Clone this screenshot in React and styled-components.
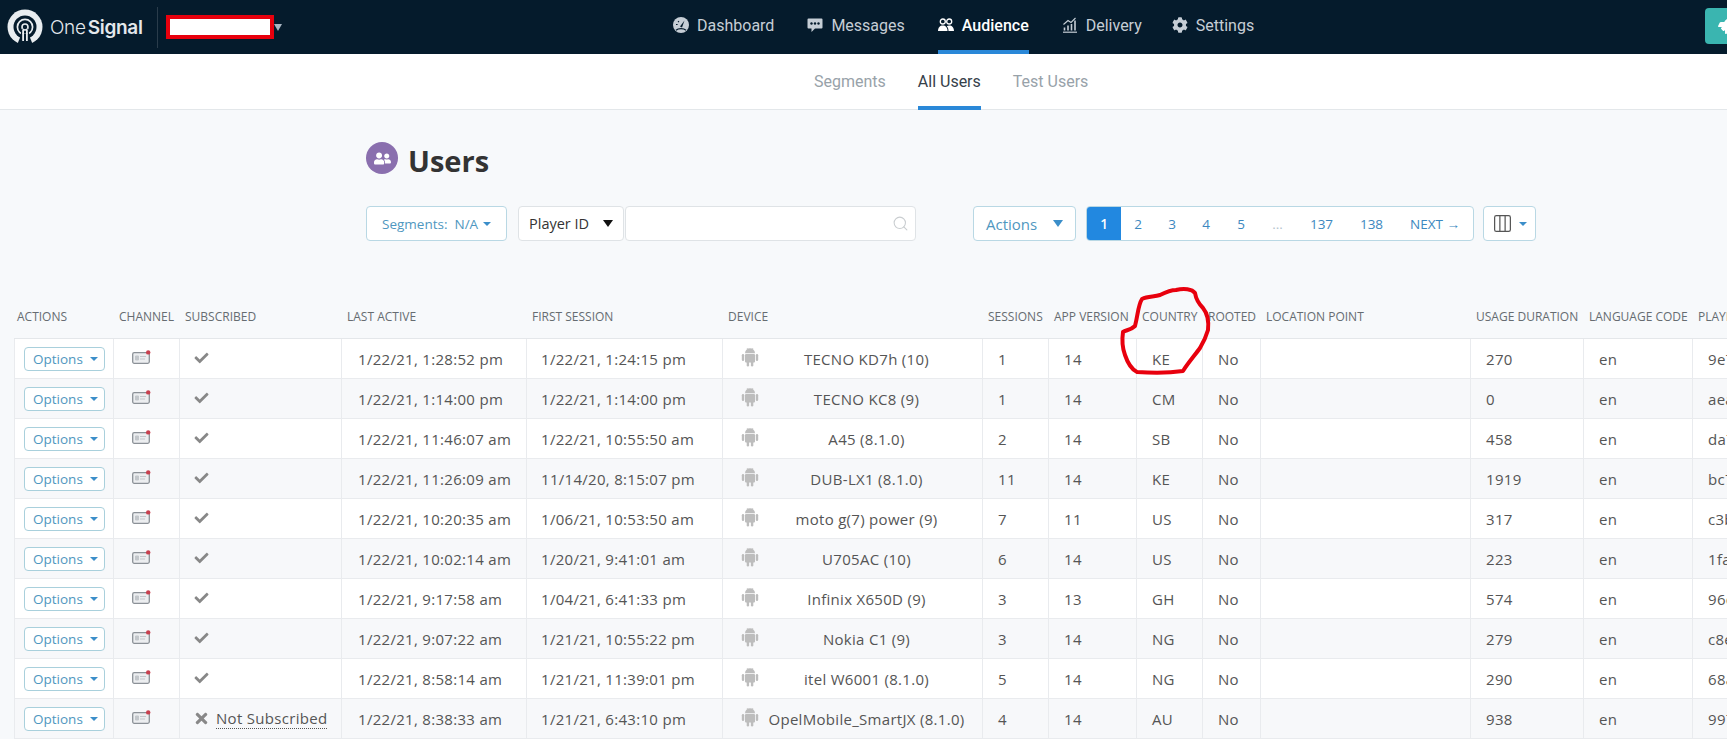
import React from 'react';
import styled, { createGlobalStyle } from 'styled-components';
import { FaCheck, FaCog, FaRocket, FaTimes, FaUserFriends } from 'react-icons/fa';
import { Columns3, Search } from 'lucide-react';

const GlobalStyle = createGlobalStyle`
    html, body {
        margin: 0;
        height: 100%;
        overflow: hidden;
        background-color: #f7f9fb;
        font-family: "Open Sans", "Liberation Sans", sans-serif;
    }
    * {
        box-sizing: border-box;
    }
`;

// Top bar
const Page = styled.div`
    position: relative;
    width: 1727px;
    height: 739px;
    overflow: hidden;
`;

const TopBar = styled.header`
    height: 54px;
    display: flex;
    align-items: stretch;
    background-color: #051b2c;
`;

const Brand = styled.div`
    width: 673px;
    flex: none;
    display: flex;
    align-items: center;
    padding-left: 7px;
`;

const Wordmark = styled.div`
    width: 99px;
    margin-left: 7px;
    font-family: Inter, sans-serif;
    font-size: 19px;
    font-weight: 300;
    color: #e4e8ec;
    letter-spacing: -0.3px;

    b {
        font-weight: 600;
        margin-left: 2px;
    }
`;

const BrandDivider = styled.div`
    width: 1px;
    height: 41px;
    margin-left: 8px;
    background-color: #2a3c4b;
`;

const AppName = styled.div`
    width: 108px;
    height: 24px;
    margin-left: 8px;
    background-color: #fff;
    border: 4px solid #e8000d;
`;

const AppCaret = styled.span`
    width: 0;
    height: 0;
    border-left: 4px solid transparent;
    border-right: 4px solid transparent;
    border-top: 7px solid #a9b6c2;
`;

const NavList = styled.nav`
    display: flex;
    gap: 33px;
`;

const NavItem = styled.a`
    display: flex;
    align-items: center;
    gap: 8px;
    height: 54px;
    margin-left: ${(props) => props.$nudge || 0}px;
    font-family: Roboto, sans-serif;
    font-size: 16px;
    font-weight: ${(props) => (props.$active ? 500 : 400)};
    color: ${(props) => (props.$active ? '#fff' : '#c6ced6')};
    border-bottom: 4px solid ${(props) => (props.$active ? '#2a88d8' : 'transparent')};

    svg {
        width: 16px;
        height: 16px;
        flex: none;
    }
`;

const UpgradeButton = styled.div`
    width: 22px;
    height: 36px;
    margin: 8px 0 0 auto;
    padding: 10px 0 0 13px;
    overflow: hidden;
    background-color: #3ab5b0;
    border-radius: 4px 0 0 4px;
    color: #fff;
    font-size: 16px;
    line-height: 1;
`;

// Sub navigation
const SubBar = styled.div`
    height: 56px;
    display: flex;
    gap: 32px;
    padding-left: 814px;
    background-color: #fff;
    border-bottom: 1px solid #e3e7ea;
`;

const SubTab = styled.a`
    height: 56px;
    display: flex;
    align-items: center;
    padding-top: 2px;
    font-family: Roboto, sans-serif;
    font-size: 16px;
    color: ${(props) => (props.$active ? '#36414a' : '#98a2a9')};
    border-bottom: 4px solid ${(props) => (props.$active ? '#2a88d8' : 'transparent')};
`;

// Title and toolbar
const TitleRow = styled.div`
    display: flex;
    align-items: center;
    gap: 10px;
    padding: 32px 0 0 366px;
    height: 96px;
`;

const TitleBadge = styled.div`
    width: 32px;
    height: 32px;
    display: flex;
    align-items: center;
    justify-content: center;
    margin-bottom: 32px;
    border-radius: 50%;
    background-color: #8a6fae;
    color: #fff;
    font-size: 17px;
`;

const Title = styled.h1`
    margin: 0 0 28px;
    font-size: 29px;
    font-weight: 700;
    color: #333;
`;

const Toolbar = styled.div`
    display: flex;
    height: 35px;
    padding-left: 366px;
`;

const OutlineButton = styled.div`
    display: flex;
    align-items: center;
    justify-content: space-between;
    width: ${(props) => props.$width}px;
    margin-left: ${(props) => props.$gap || 0}px;
    padding: 0 ${(props) => props.$pad || 12}px;
    background-color: #fff;
    border: 1px solid #b9d8e4;
    border-radius: 4px;
    color: #4f97c0;
    font-size: ${(props) => props.$size || 15}px;
`;

const Caret = styled.span`
    width: 0;
    height: 0;
    flex: none;
    border-left: ${(props) => props.$w || 4}px solid transparent;
    border-right: ${(props) => props.$w || 4}px solid transparent;
    border-top: ${(props) => props.$h || 4}px solid ${(props) => props.$color || '#3b8ec9'};
`;

const SelectBox = styled.div`
    width: 106px;
    margin-left: 11px;
    display: flex;
    align-items: center;
    justify-content: space-between;
    padding: 0 10px;
    background-color: #fff;
    border: 1px solid #dfe3e6;
    border-radius: 4px;
    color: #333;
    font-size: 14.5px;
`;

const SearchBox = styled.div`
    width: 291px;
    margin-left: 1px;
    display: flex;
    align-items: center;
    justify-content: flex-end;
    padding-right: 6px;
    background-color: #fff;
    border: 1px solid #dfe3e6;
    border-radius: 4px;
    color: #c9cdd0;
`;

const Pager = styled.div`
    width: 388px;
    margin-left: 10px;
    display: flex;
    overflow: hidden;
    background-color: #fff;
    border: 1px solid #b9d8e4;
    border-radius: 4px;
`;

const PageLink = styled.a`
    width: ${(props) => props.$width || 34}px;
    flex: none;
    display: flex;
    align-items: center;
    justify-content: center;
    font-size: 13.5px;
    font-weight: ${(props) => (props.$active ? 600 : 400)};
    background-color: ${(props) => (props.$active ? '#2288e0' : 'transparent')};
    color: ${(props) => (props.$active ? '#fff' : props.$muted ? '#b5c4ce' : '#3d88c0')};
`;

// Users table
const TableWrap = styled.div`
    margin: 57px 0 0 14px;
`;

const UsersTable = styled.table`
    width: 1879px;
    table-layout: fixed;
    border-collapse: separate;
    border-spacing: 0;
`;

const HeadCell = styled.th`
    height: 41px;
    padding: 0 0 3px 5px;
    text-align: left;
    text-transform: uppercase;
    white-space: nowrap;
    overflow: hidden;
    font-size: 12px;
    font-weight: 400;
    color: #666c71;
    border-bottom: 1px solid #e4e7ea;

    &:first-child {
        padding-left: 3px;
    }
`;

const Row = styled.tr`
    background-color: ${(props) => (props.$even ? '#f7f8fa' : '#fff')};
`;

const Cell = styled.td`
    height: 40px;
    padding: 0 0 0 ${(props) => props.$pad ?? 16}px;
    white-space: nowrap;
    overflow: hidden;
    font-size: 15px;
    letter-spacing: 0.3px;
    color: #555;
    border-bottom: 1px solid #e9ebee;
    border-right: 1px solid #e9ebee;

    &:first-child {
        border-left: 1px solid #e9ebee;
    }
`;

const OptionsButton = styled.div`
    width: 81px;
    height: 24px;
    display: flex;
    align-items: center;
    justify-content: space-between;
    padding: 0 6px 0 8px;
    background-color: #fff;
    border: 1px solid #a9d0dc;
    border-radius: 4px;
    font-size: 13.5px;
    letter-spacing: 0;
    color: #4f97c0;
`;

const ChannelIcon = styled.svg`
    display: block;
    width: 19px;
    height: 14px;
    margin-top: -3px;
`;

const StatusCheck = styled(FaCheck)`
    display: block;
    width: 15px;
    height: 14px;
    margin: -2px 0 0 -1px;
    color: #888;
`;

const NotSubscribed = styled.div`
    display: flex;
    align-items: center;
    gap: 6px;
    margin-left: -2px;
    color: #888;

    span {
        color: #555;
        border-bottom: 1px dotted #555;
    }
`;

const DeviceCell = styled.div`
    display: flex;
    align-items: center;
    padding-right: 8px;
`;

const AndroidIcon = styled.svg`
    width: 18px;
    height: 20px;
    flex: none;
    margin-top: -4px;
    fill: #bdbdbd;
`;

const DeviceName = styled.div`
    flex: 1;
    text-align: center;
`;

const Annotation = styled.svg`
    position: absolute;
    left: 1100px;
    top: 275px;
    width: 130px;
    height: 110px;
    pointer-events: none;
`;

const columns = [
    ['Actions', 100], ['Channel', 66], ['Subscribed', 162], ['Last Active', 185],
    ['First Session', 196], ['Device', 260], ['Sessions', 66], ['App Version', 88],
    ['Country', 66], ['Rooted', 58], ['Location Point', 210], ['Usage Duration', 113],
    ['Language Code', 109], ['Player ID', 200],
];

const users = [
    ['1/22/21, 1:28:52 pm', '1/22/21, 1:24:15 pm', 'TECNO KD7h (10)', 1, 14, 'KE', 270, '9e7c41d2'],
    ['1/22/21, 1:14:00 pm', '1/22/21, 1:14:00 pm', 'TECNO KC8 (9)', 1, 14, 'CM', 0, 'aea2f07b'],
    ['1/22/21, 11:46:07 am', '1/22/21, 10:55:50 am', 'A45 (8.1.0)', 2, 14, 'SB', 458, 'da71c3e9'],
    ['1/22/21, 11:26:09 am', '11/14/20, 8:15:07 pm', 'DUB-LX1 (8.1.0)', 11, 14, 'KE', 1919, 'bc7d90a4'],
    ['1/22/21, 10:20:35 am', '1/06/21, 10:53:50 am', 'moto g(7) power (9)', 7, 11, 'US', 317, 'c3b8e612'],
    ['1/22/21, 10:02:14 am', '1/20/21, 9:41:01 am', 'U705AC (10)', 6, 14, 'US', 223, '1fa94d07'],
    ['1/22/21, 9:17:58 am', '1/04/21, 6:41:33 pm', 'Infinix X650D (9)', 3, 13, 'GH', 574, '96c02eb5'],
    ['1/22/21, 9:07:22 am', '1/21/21, 10:55:22 pm', 'Nokia C1 (9)', 3, 14, 'NG', 279, 'c8e3a71f'],
    ['1/22/21, 8:58:14 am', '1/21/21, 11:39:01 pm', 'itel W6001 (8.1.0)', 5, 14, 'NG', 290, '68a5d2c0'],
    ['1/22/21, 8:38:33 am', '1/21/21, 6:43:10 pm', 'OpelMobile_SmartJX (8.1.0)', 4, 14, 'AU', 938, '997be146', true],
];

function LogoMark() {
    return (
        <svg width="36" height="36" viewBox="0 0 36 36">
            <circle cx="18" cy="18" r="17.5" fill="#e9edf0" />
            <circle cx="18" cy="18" r="11.5" fill="#051b2c" />
            <circle cx="18" cy="18" r="7.6" fill="none" stroke="#e9edf0" strokeWidth="1.7" />
            <circle cx="18" cy="18" r="3" fill="none" stroke="#e9edf0" strokeWidth="1.6" />
            <path d="M10 36 L14.5 25 L21.5 25 L26 36 Z" fill="#051b2c" />
            <path d="M15.4 19 V29 H13 L14 24 Z M20.6 19 V29 H23 L22 24 Z" fill="#051b2c" />
            <path d="M15.2 21 V32 H17 V21 Z M19 21 V32 H20.8 V21 Z" fill="#e9edf0" />
        </svg>
    );
}

function DashboardIcon() {
    return (
        <svg viewBox="0 0 16 16">
            <circle cx="8" cy="8" r="8" fill="currentColor" />
            <path d="M7 9.5 11.5 3.5 9 10.5Z" fill="#051b2c" />
            <path d="M3 13.2C5.5 11 10.5 11 13 13.2" fill="none" stroke="#051b2c" strokeWidth="1.3" />
            <path d="M3 7.5h1.6M5 4.2l1 1" stroke="#051b2c" strokeWidth="1.1" />
        </svg>
    );
}

function MessagesIcon() {
    return (
        <svg viewBox="0 0 16 16">
            <path d="M1.5 1.5h13a1 1 0 0 1 1 1v8a1 1 0 0 1-1 1H8L4.5 15v-3.500h-3a1 1 0 0 1-1-1v-8a1 1 0 0 1 1-1Z" fill="currentColor" />
            <circle cx="4.5" cy="6.500" r="1.2" fill="#051b2c" />
            <circle cx="8" cy="6.500" r="1.2" fill="#051b2c" />
            <circle cx="11.500" cy="6.500" r="1.2" fill="#051b2c" />
        </svg>
    );
}

function AudienceIcon() {
    return (
        <svg viewBox="0 0 16 16">
            <circle cx="4.800" cy="4.500" r="2.500" fill="none" stroke="currentColor" strokeWidth="1.300" />
            <circle cx="11.200" cy="4.500" r="2.500" fill="none" stroke="currentColor" strokeWidth="1.300" />
            <path d="M0 14c0-3.500 2-5.500 4.800-5.500S9.500 10.500 9.500 14Z" fill="currentColor" />
            <path d="M10.500 14c0-2-.5-3.700-1.700-4.800 .7-.5 1.500-.7 2.400-.7 2.800 0 4.800 2 4.800 5.500Z" fill="currentColor" />
        </svg>
    );
}

function DeliveryIcon() {
    return (
        <svg viewBox="0 0 16 16" fill="none" stroke="currentColor">
            <path d="M1 15.200h14" strokeWidth="1.200" />
            <path d="M2.500 13.500v-3M6 13.500V8.500M9.500 13.500V7M13 13.500V3.500" strokeWidth="1.600" />
            <path d="M1.500 7.500 6 3.500l3 2L13.500 1" strokeWidth="1.100" />
        </svg>
    );
}

function ChannelGlyph() {
    return (
        <ChannelIcon viewBox="0 0 19 14">
            <rect x="0.7" y="2.700" width="16.600" height="10.600" rx="1.500" fill="#eceef0" stroke="#8b9197" strokeWidth="1.300" />
            <path d="M3.500 6h3v4h-3zM8 6.500h6M8 9h5" stroke="#c3c7cb" strokeWidth="1" fill="#c3c7cb" />
            <circle cx="16.200" cy="2.400" r="2.200" fill="#c8404e" />
        </ChannelIcon>
    );
}

function AndroidGlyph() {
    return (
        <AndroidIcon viewBox="0 0 18 20">
            <path d="M4 6.300a5 5 0 0 1 10 0Z" />
            <path d="M6 1 7 2.500M12 1l-1 1.500" stroke="#bdbdbd" strokeWidth="0.700" />
            <rect x="4" y="7" width="10" height="8.500" rx="1" />
            <rect x="0.800" y="7" width="2.400" height="7" rx="1.200" />
            <rect x="14.800" y="7" width="2.400" height="7" rx="1.200" />
            <rect x="5.700" y="14" width="2.400" height="5.500" rx="1.200" />
            <rect x="9.900" y="14" width="2.400" height="5.500" rx="1.200" />
        </AndroidIcon>
    );
}

function App() {
    return (
        <Page>
            <GlobalStyle />
            <TopBar>
                <Brand>
                    <LogoMark />
                    <Wordmark>One<b>Signal</b></Wordmark>
                    <BrandDivider />
                    <AppName />
                    <AppCaret />
                </Brand>
                <NavList>
                    <NavItem><DashboardIcon />Dashboard</NavItem>
                    <NavItem><MessagesIcon />Messages</NavItem>
                    <NavItem $active><AudienceIcon />Audience</NavItem>
                    <NavItem><DeliveryIcon />Delivery</NavItem>
                    <NavItem $nudge={-3}><FaCog />Settings</NavItem>
                </NavList>
                <UpgradeButton><FaRocket /></UpgradeButton>
            </TopBar>
            <SubBar>
                <SubTab>Segments</SubTab>
                <SubTab $active>All Users</SubTab>
                <SubTab>Test Users</SubTab>
            </SubBar>
            <TitleRow>
                <TitleBadge><FaUserFriends /></TitleBadge>
                <Title>Users</Title>
            </TitleRow>
            <Toolbar>
                <OutlineButton $width={141} $size={13.5} $pad={15}>
                    Segments:&nbsp; N/A <Caret />
                </OutlineButton>
                <SelectBox>Player ID <Caret $w={5} $h={7} $color="#111" /></SelectBox>
                <SearchBox><Search size={17} strokeWidth={1.5} /></SearchBox>
                <OutlineButton $width={103} $gap={57}>Actions <Caret $w={5} $h={7} /></OutlineButton>
                <Pager>
                    <PageLink $active>1</PageLink>
                    <PageLink>2</PageLink>
                    <PageLink>3</PageLink>
                    <PageLink>4</PageLink>
                    <PageLink $width={36}>5</PageLink>
                    <PageLink $muted $width={37}>...</PageLink>
                    <PageLink $width={51}>137</PageLink>
                    <PageLink $width={49}>138</PageLink>
                    <PageLink $width={78}>NEXT →</PageLink>
                </Pager>
                <OutlineButton $width={53} $gap={9} $pad={8}>
                    <Columns3 size={21} strokeWidth={1.4} color="#555" />
                    <Caret />
                </OutlineButton>
            </Toolbar>
            <TableWrap>
                <UsersTable>
                    <colgroup>
                        {columns.map(([name, width]) => <col key={name} width={width} />)}
                    </colgroup>
                    <thead>
                        <tr>
                            {columns.map(([name]) => <HeadCell key={name}>{name}</HeadCell>)}
                        </tr>
                    </thead>
                    <tbody>
                        {users.map((user, index) => (
                            <Row key={user[7]} $even={index % 2 === 1}>
                                <Cell $pad={9}>
                                    <OptionsButton>Options <Caret /></OptionsButton>
                                </Cell>
                                <Cell $pad={18}><ChannelGlyph /></Cell>
                                <Cell $pad={15}>
                                    {user[8] ? (
                                        <NotSubscribed>
                                            <FaTimes size={17} />
                                            <span>Not Subscribed</span>
                                        </NotSubscribed>
                                    ) : <StatusCheck />}
                                </Cell>
                                <Cell>{user[0]}</Cell>
                                <Cell $pad={14}>{user[1]}</Cell>
                                <Cell $pad={18}>
                                    <DeviceCell>
                                        <AndroidGlyph />
                                        <DeviceName>{user[2]}</DeviceName>
                                    </DeviceCell>
                                </Cell>
                                <Cell $pad={15}>{user[3]}</Cell>
                                <Cell $pad={15}>{user[4]}</Cell>
                                <Cell $pad={15}>{user[5]}</Cell>
                                <Cell $pad={15}>No</Cell>
                                <Cell />
                                <Cell $pad={15}>{user[6]}</Cell>
                                <Cell $pad={15}>en</Cell>
                                <Cell $pad={15}>{user[7]}</Cell>
                            </Row>
                        ))}
                    </tbody>
                </UsersTable>
            </TableWrap>
            <Annotation viewBox="0 0 130 110" fill="none">
                <path
                    d="M35 51 C38 40 38 30 42 24 C48 21 54 22 60 20 C66 17 72 15 76 15 C84 13 92 14 95 18 C96 24 98 28 103 33 C107 38 109 46 108 55 C106 62 103 68 100 73 C95 80 88 88 83 96 C70 98 50 98 37 97 C31 94 27 86 25 80 C22 72 22 64 23 57 C26 55 31 55 35 51 Z"
                    stroke="#e8000d"
                    strokeWidth="4"
                    strokeLinejoin="round"
                />
            </Annotation>
        </Page>
    );
}

export default App;
